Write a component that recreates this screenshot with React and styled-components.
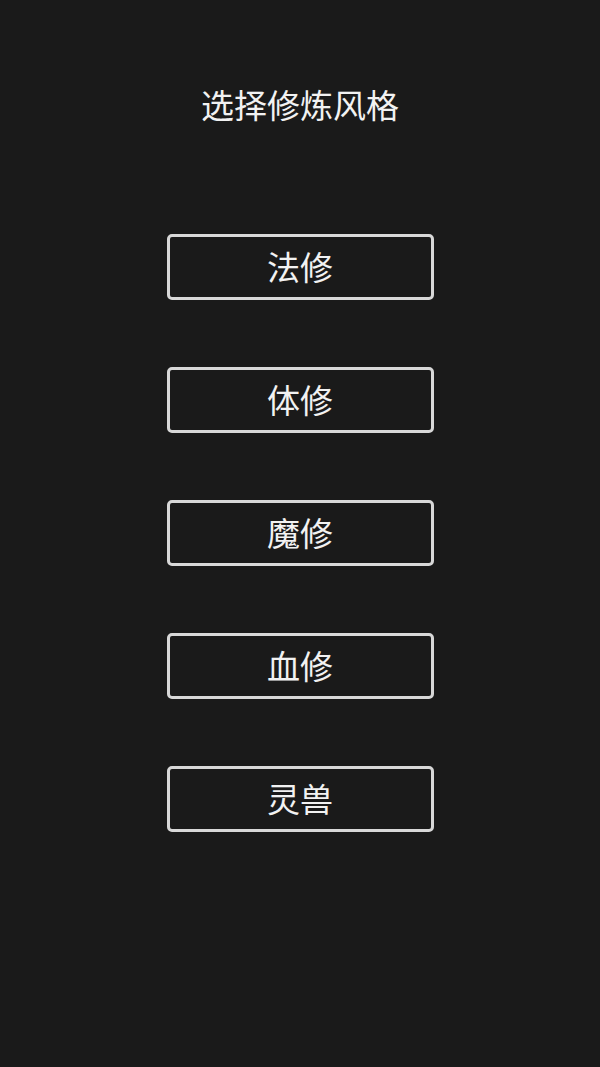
import styled, { createGlobalStyle } from "styled-components";

const GlobalStyle = createGlobalStyle`
    html, body {
        margin: 0;
        padding: 0;
        background: #1a1a1a;
    }
    body {
        font-family: "Noto Sans CJK SC", "Noto Sans", sans-serif;
    }
`;

const StyledPage = styled.div`
    min-height: 1067px;
    display: flex;
    flex-direction: column;
    align-items: center;
    background: #1a1a1a;
`;

const StyledTitle = styled.h1`
    margin: 83px 0 0;
    height: 42px;
    line-height: 42px;
    font-size: 33px;
    font-weight: normal;
    color: #f2f2f2;
`;

const StyledChoiceList = styled.div`
    margin-top: 109px;
    display: flex;
    flex-direction: column;
    gap: 67px;
`;

const StyledChoiceButton = styled.button`
    box-sizing: border-box;
    width: 267px;
    height: 66px;
    border: 3px solid #d8d8d8;
    border-radius: 5px;
    background: #1a1a1a;
    color: #f2f2f2;
    font-family: inherit;
    font-size: 33px;
    line-height: 1;
    cursor: pointer;
    padding: 0 0 2px;
`;

const choices = ["法修", "体修", "魔修", "血修", "灵兽"];

function App() {
    return (
        <StyledPage>
            <GlobalStyle/>
            <StyledTitle>选择修炼风格</StyledTitle>
            <StyledChoiceList>
                {choices.map((choice) => (
                    <StyledChoiceButton key={choice}>
                        {choice}
                    </StyledChoiceButton>
                ))}
            </StyledChoiceList>
        </StyledPage>
    );
}

export default App;
